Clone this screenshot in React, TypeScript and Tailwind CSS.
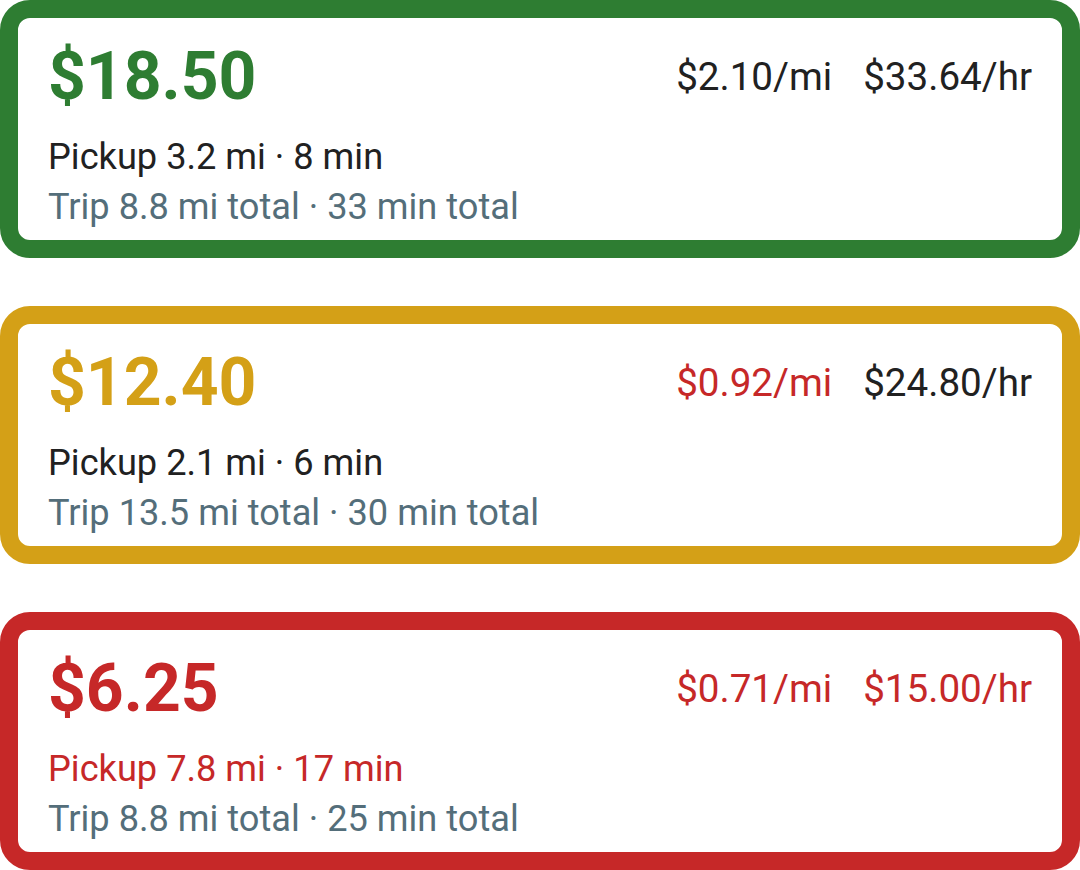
type Tone = "good" | "ok" | "bad";

type Offer = {
  tone: Tone;
  price: string;
  perMile: string;
  perHour: string;
  mileBad: boolean;
  hourBad: boolean;
  pickup: string;
  pickupBad: boolean;
  trip: string;
};

const offers: Offer[] = [
  {
    tone: "good",
    price: "$18.50",
    perMile: "$2.10/mi",
    perHour: "$33.64/hr",
    mileBad: false,
    hourBad: false,
    pickup: "Pickup 3.2 mi · 8 min",
    pickupBad: false,
    trip: "Trip 8.8 mi total · 33 min total",
  },
  {
    tone: "ok",
    price: "$12.40",
    perMile: "$0.92/mi",
    perHour: "$24.80/hr",
    mileBad: true,
    hourBad: false,
    pickup: "Pickup 2.1 mi · 6 min",
    pickupBad: false,
    trip: "Trip 13.5 mi total · 30 min total",
  },
  {
    tone: "bad",
    price: "$6.25",
    perMile: "$0.71/mi",
    perHour: "$15.00/hr",
    mileBad: true,
    hourBad: true,
    pickup: "Pickup 7.8 mi · 17 min",
    pickupBad: true,
    trip: "Trip 8.8 mi total · 25 min total",
  },
];

const borderTone: Record<Tone, string> = {
  good: "border-[#2e7d32]",
  ok: "border-[#d4a017]",
  bad: "border-[#c62828]",
};

const priceTone: Record<Tone, string> = {
  good: "text-[#2e7d32]",
  ok: "text-[#d4a017]",
  bad: "text-[#c62828]",
};

const OfferCard = ({ offer }: { offer: Offer }) => {
  return (
    <article
      className={`h-[258px] rounded-[30px] border-[18px] bg-white px-[30px] pt-[26px] ${borderTone[offer.tone]}`}
    >
      <div className="flex items-center justify-between">
        <p className={`text-[66px] font-bold leading-[66px] ${priceTone[offer.tone]}`}>
          {offer.price}
        </p>
        <div className="flex items-center gap-[31px] text-[38.6px] leading-none">
          <span className={offer.mileBad ? "text-[#c62828]" : "text-[#212121]"}>
            {offer.perMile}
          </span>
          <span className={offer.hourBad ? "text-[#c62828]" : "text-[#212121]"}>
            {offer.perHour}
          </span>
        </div>
      </div>

      {/* Pickup + trip details */}
      <div className="mt-[22px] text-[36.2px] leading-[50px]">
        <p className={offer.pickupBad ? "text-[#c62828]" : "text-[#212121]"}>
          {offer.pickup}
        </p>
        <p className="text-[#546e7a]">{offer.trip}</p>
      </div>
    </article>
  );
};

export default function App() {
  return (
    <main className="flex w-[1080px] flex-col gap-12 bg-white font-['Roboto',sans-serif]">
      {offers.map((offer) => (
        <OfferCard key={offer.price} offer={offer} />
      ))}
    </main>
  );
}
